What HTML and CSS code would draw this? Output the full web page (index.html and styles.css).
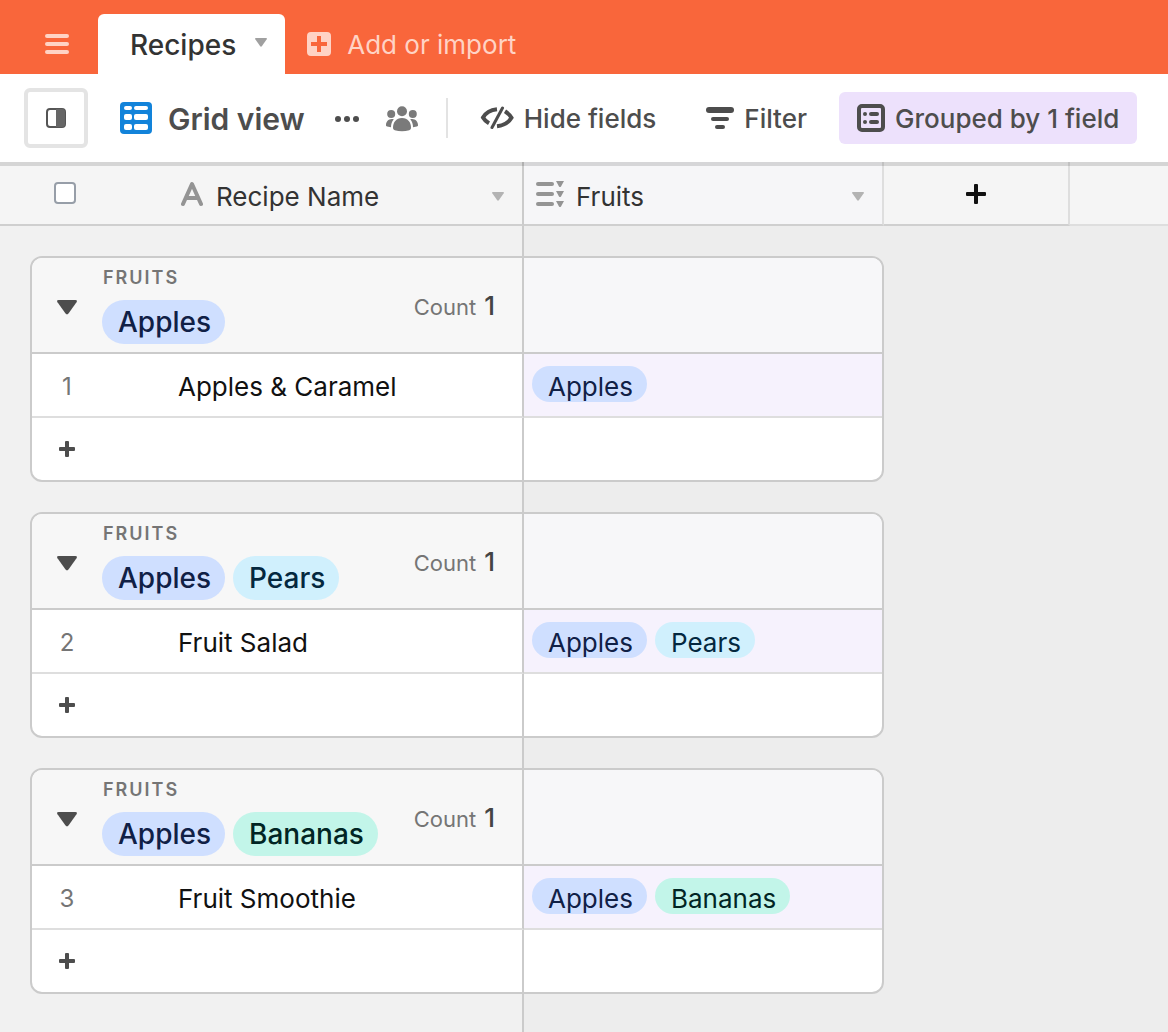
FILE: index.html
```html
<!DOCTYPE html>
<html lang="en">
<head>
<meta charset="utf-8">
<meta name="viewport" content="width=device-width, initial-scale=1">
<title>Recipes</title>
<link rel="stylesheet" href="styles.css">
</head>
<body>
<svg class="sprite" aria-hidden="true">
  <symbol id="caret" viewBox="0 0 12 9"><path d="M1 0h10q1.500 0 .7 1.300L7 8q-1 1.300-2 0L.3 1.300Q-.5 0 1 0z" fill="currentColor"/></symbol>
  <symbol id="plus" viewBox="0 0 20 20"><path d="M9 0h2q1 0 1 1v7h7q1 0 1 1v2q0 1-1 1h-7v7q0 1-1 1H9q-1 0-1-1v-7H1q-1 0-1-1V9q0-1 1-1h7V1q0-1 1-1z" fill="currentColor"/></symbol>
  <symbol id="plus-small" viewBox="0 0 16 16"><path d="M7 0h2q1 0 1 1v5h5q1 0 1 1v2q0 1-1 1h-5v5q0 1-1 1H7q-1 0-1-1v-5H1q-1 0-1-1V7q0-1 1-1h5V1q0-1 1-1z" fill="currentColor"/></symbol>
</svg>

<header class="topbar">
  <button class="menu" type="button" aria-label="Menu">
    <svg width="24" height="20" viewBox="0 0 24 20"><path d="M2 2h20M2 10h20M2 18h20" stroke="currentColor" stroke-width="4" stroke-linecap="round"/></svg>
  </button>
  <button class="tab" type="button">Recipes <svg class="tab-caret" width="12" height="9"><use href="#caret"/></svg></button>
  <button class="add-table" type="button">
    <svg width="24" height="24" viewBox="0 0 24 24"><path fill="currentColor" fill-rule="evenodd" d="M4 0h16a4 4 0 0 1 4 4v16a4 4 0 0 1-4 4H4a4 4 0 0 1-4-4V4a4 4 0 0 1 4-4zM10 4v6H4v4h6v6h4v-6h6v-4h-6V4z"/></svg>
    Add or import
  </button>
</header>

<nav class="toolbar" aria-label="View">
  <button class="sidebar-toggle" type="button" aria-label="Toggle sidebar">
    <svg width="20" height="20" viewBox="0 0 20 20"><rect x="1" y="1" width="18" height="18" rx="3" fill="#fff" stroke="#555" stroke-width="2"/><path d="M10 1h6q3 0 3 3v12q0 3-3 3h-6z" fill="#666"/></svg>
  </button>
  <button class="view-name" type="button">
    <svg width="32" height="32" viewBox="0 0 32 32"><rect width="32" height="32" rx="4" fill="#1283da"/><g fill="#fff"><rect x="4" y="4" width="8" height="4" rx="2"/><rect x="14" y="4" width="14" height="4" rx="2"/><rect x="4" y="12" width="8" height="6" rx="2"/><rect x="14" y="12" width="14" height="6" rx="2"/><rect x="4" y="22" width="8" height="6" rx="2"/><rect x="14" y="22" width="14" height="6" rx="2"/></g></svg>
    Grid view
  </button>
  <button class="icon-button dots" type="button" aria-label="View options">
    <svg width="24" height="6" viewBox="0 0 24 6" fill="currentColor"><circle cx="3" cy="3" r="3"/><circle cx="12" cy="3" r="3"/><circle cx="21" cy="3" r="3"/></svg>
  </button>
  <button class="icon-button people" type="button" aria-label="Collaborators">
    <svg width="32" height="26" viewBox="0 0 32 26" fill="currentColor"><circle cx="16" cy="5.200" r="5"/><circle cx="5.200" cy="8" r="4"/><circle cx="26.800" cy="8" r="4"/><path d="M16 12c6 0 9 4.500 9 9.500 0 1.500-.5 2.300-1.800 2.700C18.500 25.500 13.500 25.500 8.800 24.200 7.500 23.800 7 23 7 21.500 7 16.500 10 12 16 12zM7.800 13.300C5.800 15.500 5 18.200 5 21.300L1.200 20.600C.3 20.300 0 20 0 19c0-3.800 3.300-7 7.800-5.700zM24.200 13.300c2 2.200 2.800 4.900 2.800 8l3.800-.7c.9-.3 1.200-.6 1.200-1.600 0-3.800-3.300-7-7.800-5.700z"/></svg>
  </button>
  <span class="divider"></span>
  <button class="tool" type="button">
    <svg width="34" height="24" viewBox="0 0 34 24" fill="none" stroke="currentColor" stroke-width="4"><path d="M17 3.200C10 4 5.500 7 3 11.500c1.400 2.600 3.400 4.200 6 5.700M17 20.300C24 19.500 29 16 31.500 11.800 30.200 9.500 28.500 7.500 25 5.300"/><path d="M22.500 2 12 21.500" stroke-width="3" stroke-linecap="round"/></svg>
    Hide fields
  </button>
  <button class="tool" type="button">
    <svg width="28" height="22" viewBox="0 0 28 22" fill="currentColor"><rect width="28" height="6" rx="3"/><rect x="5" y="10" width="18" height="4" rx="2"/><rect x="9" y="18" width="10" height="4" rx="2"/></svg>
    Filter
  </button>
  <button class="tool tool-active" type="button">
    <svg width="28" height="28" viewBox="0 0 28 28" fill="currentColor"><rect x="2" y="2" width="24" height="24" rx="3" fill="none" stroke="currentColor" stroke-width="4"/><circle cx="8" cy="10" r="2"/><circle cx="8" cy="18" r="2"/><rect x="12" y="8" width="10" height="4" rx="2"/><rect x="12" y="16" width="10" height="4" rx="2"/></svg>
    Grouped by 1 field
  </button>
</nav>

<main class="grid">
  <table class="columns">
    <colgroup><col class="c-select"><col class="c-name"><col class="c-field"><col class="c-add"><col></colgroup>
    <tr>
      <th class="select-all"><input type="checkbox" aria-label="Select all records"></th>
      <th class="pinned-edge" scope="col"><div class="field"><svg class="type-text" width="22" height="26" viewBox="0 0 22 26" fill="none" stroke="currentColor" stroke-width="4" stroke-linecap="round" stroke-linejoin="round"><path d="M2 23 11 3l9 20M6 17h10"/></svg><span>Recipe Name</span><svg class="field-caret" width="12" height="9"><use href="#caret"/></svg></div></th>
      <th class="field-cell" scope="col"><div class="field"><svg width="28" height="26" viewBox="0 0 28 26" fill="currentColor"><rect y="1" width="18" height="4" rx="2"/><rect y="11" width="18" height="4" rx="2"/><rect y="21" width="18" height="4" rx="2"/><path d="M20 0h8l-3 5.500q-1 1-2 0zM20 10h8l-3 5.500q-1 1-2 0zM20 20h8l-3 5.500q-1 1-2 0z"/></svg><span>Fruits</span><svg class="field-caret" width="12" height="9"><use href="#caret"/></svg></div></th>
      <th class="add-field"><button type="button" aria-label="Add field"><svg width="20" height="20"><use href="#plus"/></svg></button></th>
      <td class="rest"></td>
    </tr>
  </table>

  <div class="groups">
    <section class="group">
      <table>
        <colgroup><col class="g-index"><col class="g-name"><col></colgroup>
        <tr class="group-head">
          <th colspan="2" scope="rowgroup">
            <div class="summary">
              <button class="toggle" type="button" aria-label="Collapse group"><svg width="20" height="15" viewBox="0 0 12 9"><use href="#caret"/></svg></button>
              <div class="key"><span class="label">FRUITS</span><span class="tags"><span class="tag apples">Apples</span></span></div>
              <div class="count">Count <b>1</b></div>
            </div>
          </th>
          <td></td>
        </tr>
        <tr class="record"><td class="index">1</td><td class="name">Apples &amp; Caramel</td><td class="value"><span class="tags"><span class="tag apples">Apples</span></span></td></tr>
        <tr class="new"><td class="index"><button type="button" aria-label="Add record"><svg width="16" height="16"><use href="#plus-small"/></svg></button></td><td></td><td></td></tr>
      </table>
    </section>

    <section class="group">
      <table>
        <colgroup><col class="g-index"><col class="g-name"><col></colgroup>
        <tr class="group-head">
          <th colspan="2" scope="rowgroup">
            <div class="summary">
              <button class="toggle" type="button" aria-label="Collapse group"><svg width="20" height="15" viewBox="0 0 12 9"><use href="#caret"/></svg></button>
              <div class="key"><span class="label">FRUITS</span><span class="tags"><span class="tag apples">Apples</span><span class="tag pears">Pears</span></span></div>
              <div class="count">Count <b>1</b></div>
            </div>
          </th>
          <td></td>
        </tr>
        <tr class="record"><td class="index">2</td><td class="name">Fruit Salad</td><td class="value"><span class="tags"><span class="tag apples">Apples</span><span class="tag pears">Pears</span></span></td></tr>
        <tr class="new"><td class="index"><button type="button" aria-label="Add record"><svg width="16" height="16"><use href="#plus-small"/></svg></button></td><td></td><td></td></tr>
      </table>
    </section>

    <section class="group">
      <table>
        <colgroup><col class="g-index"><col class="g-name"><col></colgroup>
        <tr class="group-head">
          <th colspan="2" scope="rowgroup">
            <div class="summary">
              <button class="toggle" type="button" aria-label="Collapse group"><svg width="20" height="15" viewBox="0 0 12 9"><use href="#caret"/></svg></button>
              <div class="key"><span class="label">FRUITS</span><span class="tags"><span class="tag apples">Apples</span><span class="tag bananas">Bananas</span></span></div>
              <div class="count">Count <b>1</b></div>
            </div>
          </th>
          <td></td>
        </tr>
        <tr class="record"><td class="index">3</td><td class="name">Fruit Smoothie</td><td class="value"><span class="tags"><span class="tag apples">Apples</span><span class="tag bananas">Bananas</span></span></td></tr>
        <tr class="new"><td class="index"><button type="button" aria-label="Add record"><svg width="16" height="16"><use href="#plus-small"/></svg></button></td><td></td><td></td></tr>
      </table>
    </section>
  </div>
</main>
</body>
</html>
```
FILE: styles.css
```css
:root {
  --line: #cbcbcb;
  --line-soft: #dedede;
  --text: #333;
  --muted: #757575;
  --pinned: 522px;
}

* { box-sizing: border-box; }

body {
  margin: 0;
  min-height: 100vh;
  display: flex;
  flex-direction: column;
  background: #fff;
  color: var(--text);
  font: 400 26px/32px Inter, "Liberation Sans", sans-serif;
}

button {
  margin: 0;
  padding: 0;
  border: 0;
  background: none;
  color: inherit;
  font: inherit;
  display: flex;
  align-items: center;
  white-space: nowrap;
  cursor: pointer;
}

svg { display: block; flex: none; }
.sprite { position: absolute; width: 0; height: 0; }

/* Top bar */
.topbar {
  display: flex;
  align-items: stretch;
  height: 74px;
  padding-top: 14px;
  background: #f9663b;
  color: #ffd3c5;
}
.menu { width: 98px; padding-left: 45px; }
.tab {
  gap: 19px;
  padding: 2px 18px 0 32px;
  border-radius: 6px 6px 0 0;
  background: #fff;
  color: var(--text);
  font-size: 28px;
  font-weight: 500;
}
.tab-caret { color: #a0a0a0; margin-bottom: 6px; }
.add-table { gap: 16px; padding: 2px 22px 0; }
.add-table svg { margin-bottom: 2px; }

/* View toolbar */
.toolbar {
  position: relative;
  z-index: 1;
  display: flex;
  align-items: center;
  height: 88px;
  padding: 0 24px;
  background: #fff;
  color: #4d4d4d;
  font-weight: 500;
  box-shadow: 0 4px 0 rgba(0, 0, 0, .13);
}
.sidebar-toggle {
  justify-content: center;
  width: 64px;
  height: 60px;
  border: 4px solid #e4e4e4;
  border-radius: 6px;
}
.view-name {
  gap: 16px;
  margin-left: 32px;
  padding-top: 2px;
  font-size: 30px;
  font-weight: 600;
}
.view-name svg, .tool svg { margin-bottom: 2px; }
.icon-button { height: 40px; padding-top: 2px; }
.dots { margin-left: 30px; }
.people { margin-left: 27px; color: #7a7a7a; }
.divider { width: 2px; height: 40px; margin: 0 14px 0 28px; background: #e3e3e3; }
.tool {
  gap: 10px;
  height: 52px;
  padding: 2px 18px 0;
  border-radius: 6px;
}
.tool + .tool { margin-left: 14px; }
.tool-active { background: #ede1fc; }

/* Grid */
.grid {
  flex: 1;
  background: linear-gradient(to right, #f1f1f1 var(--pinned), var(--line) var(--pinned), var(--line) 524px, #ededed 524px);
}
table {
  width: 100%;
  border-collapse: separate;
  border-spacing: 0;
  table-layout: fixed;
}
th, td { padding: 0; font-weight: 400; text-align: left; }

.columns th, .columns td {
  height: 64px;
  padding-top: 2px;
  background: #f5f5f5;
  border-bottom: 2px solid #cfcfcf;
}
.c-select { width: 102px; }
.c-name { width: 422px; }
.c-field { width: 360px; }
.c-add { width: 186px; }
.columns .pinned-edge { border-right: 2px solid var(--line); padding-left: 78px; }
.columns .field-cell { border-right: 2px solid var(--line-soft); padding-left: 12px; background: #f6f6f8; }
.columns .add-field { border-right: 2px solid var(--line-soft); }
.columns .rest { border-bottom-color: var(--line-soft); }
.add-field button { width: 100%; justify-content: center; color: #111; }
.select-all input {
  appearance: none;
  display: block;
  width: 22px;
  height: 22px;
  margin: 0 0 2px 54px;
  border: 2px solid #979ea8;
  border-radius: 4px;
  background: #fff;
}
.field {
  display: flex;
  align-items: center;
  gap: 12px;
  padding: 6px 18px 0 0;
}
.field > svg { color: #949494; margin-bottom: 6px; }
.field .type-text { margin: 0 1px 6px; }
.field .field-caret { margin: 0 0 2px auto; color: #b3b3b3; }

/* Record groups */
.groups {
  display: flex;
  flex-direction: column;
  gap: 30px;
  max-width: 884px;
  padding: 30px 0 30px 30px;
}
.group {
  border: 2px solid var(--line);
  border-radius: 12px;
  overflow: hidden;
  background: #fff;
}
.g-index { width: 70px; }
.g-name { width: 422px; }

.group-head th, .group-head td {
  height: 96px;
  border-bottom: 2px solid var(--line);
  background: #f7f7f7;
}
.group-head td { background: #f7f7f9; }
.group-head th, .record .name, .new td:nth-child(2) { border-right: 2px solid var(--line); }
.summary { display: flex; align-items: center; padding-right: 27px; }
.toggle { width: 70px; height: 44px; padding-top: 4px; justify-content: center; color: #4d4d4d; }
.key { display: flex; flex-direction: column; }
.label {
  color: var(--muted);
  font-size: 18px;
  font-weight: 600;
  line-height: 24px;
  letter-spacing: 2px;
  padding-left: 1px;
}
.tags { display: flex; gap: 8px; }
.tag { padding: 0 14px 0 16px; border-radius: 22px; white-space: nowrap; }
.key .tag { margin-top: 10px; font-size: 28px; font-weight: 500; line-height: 44px; }
.count {
  display: flex;
  align-items: baseline;
  gap: 8px;
  margin-left: auto;
  padding-top: 2px;
  color: var(--muted);
  font-size: 22px;
}
.count b { color: #444; font-size: 26px; font-weight: 500; }

.record td { height: 64px; padding-top: 4px; border-bottom: 2px solid var(--line-soft); }
.record .index { color: var(--muted); font-size: 24px; text-align: center; }
.record .name { padding-left: 76px; color: #111; }
.record .value { padding: 0 0 2px 8px; background: #f6f2fd; }
.value .tag { height: 36px; line-height: 42px; }
.new td { height: 62px; }
.new button { width: 100%; justify-content: center; color: #4d4d4d; }

.apples { background: #cfdfff; color: #102046; }
.pears { background: #d0f0fd; color: #04283f; }
.bananas { background: #c2f5e9; color: #012524; }
```
